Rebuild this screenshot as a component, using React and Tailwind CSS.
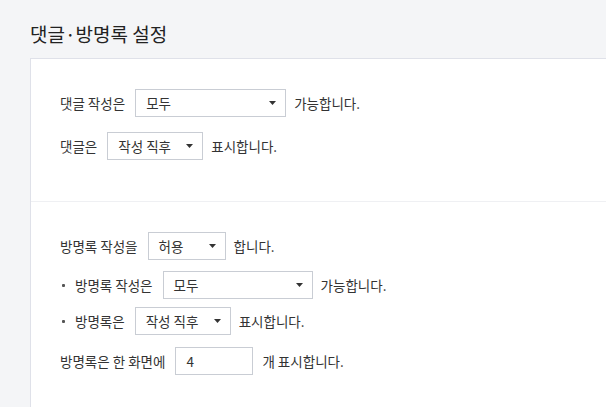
import React from "react";

const font = { fontFamily: '"Noto Sans CJK KR", "Noto Sans", sans-serif' };

function Arrow() {
  return (
    <svg width="7" height="4" viewBox="0 0 7 4" className="shrink-0">
      <path d="M0 0 H7 L3.5 4 Z" fill="#333" />
    </svg>
  );
}

function Select({ value, w }) {
  return (
    <div
      className={`h-[28px] ${w} border border-[#c9cdd4] bg-white flex items-center justify-between pl-[10px] pr-[9px] text-[#333]`}
    >
      <span>{value}</span>
      <Arrow />
    </div>
  );
}

function Bullet() {
  return <span className="w-[3px] h-[3px] bg-[#555] rounded-[1px] ml-[2px] mr-[10px]" />;
}

export default function App() {
  return (
    <div
      className="w-[606px] h-[407px] overflow-hidden bg-[#f4f5f7] flex flex-col text-[13.5px] text-[#333]"
      style={font}
    >
      <div className="h-[58px] pt-[21px] pl-[30px] text-[19px] leading-[26px] text-[#222]">
        댓글·방명록 설정
      </div>
      <div className="flex-1 ml-[30px] bg-white border-l border-t border-[#dfe1e9]">
        <div className="pt-[30px] pb-[41px] pl-[29px] border-b border-[#eff0f3]">
          <div className="flex items-center">
            <span className="mr-[10px]">댓글 작성은</span>
            <Select value="모두" w="w-[151px]" />
            <span className="ml-[8px]">가능합니다.</span>
          </div>
          <div className="flex items-center mt-[15px]">
            <span className="mr-[10px]">댓글은</span>
            <Select value="작성 직후" w="w-[96px]" />
            <span className="ml-[8px]">표시합니다.</span>
          </div>
        </div>
        <div className="pt-[30px] pl-[29px]">
          <div className="flex items-center">
            <span className="mr-[10px]">방명록 작성을</span>
            <Select value="허용" w="w-[78px]" />
            <span className="ml-[8px]">합니다.</span>
          </div>
          <div className="flex items-center mt-[11px]">
            <Bullet />
            <span className="mr-[10px]">방명록 작성은</span>
            <Select value="모두" w="w-[150px]" />
            <span className="ml-[8px]">가능합니다.</span>
          </div>
          <div className="flex items-center mt-[8px]">
            <Bullet />
            <span className="mr-[10px]">방명록은</span>
            <Select value="작성 직후" w="w-[96px]" />
            <span className="ml-[8px]">표시합니다.</span>
          </div>
          <div className="flex items-center mt-[12px]">
            <span className="mr-[10px]">방명록은 한 화면에</span>
            <div className="h-[28px] w-[78px] border border-[#c9cdd4] flex items-center pl-[10px]">4</div>
            <span className="ml-[9px]">개 표시합니다.</span>
          </div>
        </div>
      </div>
    </div>
  );
}
